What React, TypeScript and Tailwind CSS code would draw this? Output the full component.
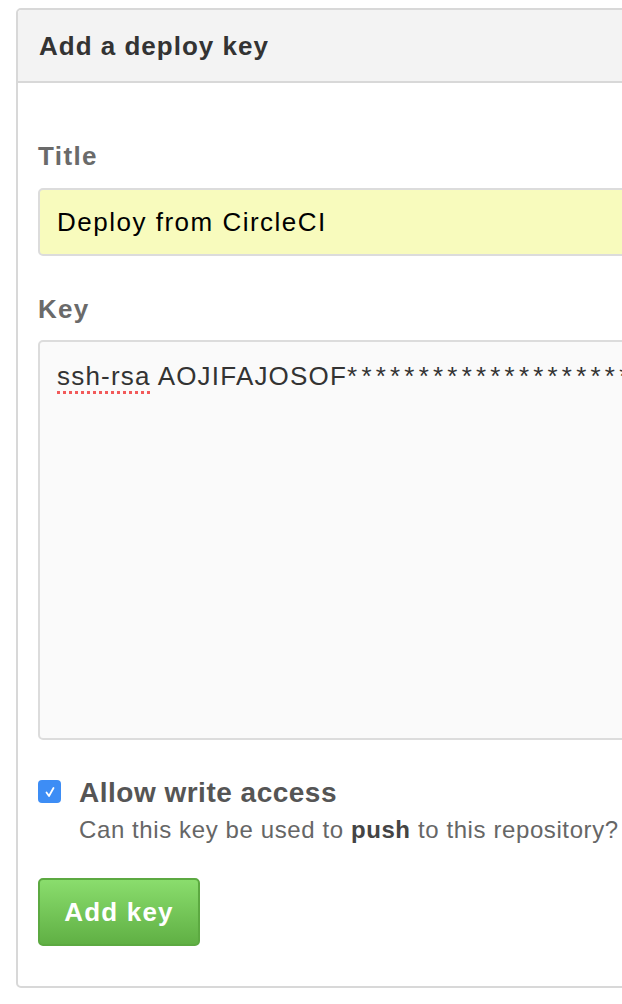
import React from "react";

export default function App() {
  return (
    <div className="min-h-screen w-[622px] overflow-hidden bg-white pt-2 pl-4 font-['Liberation_Sans',Arial,sans-serif]">
      <div className="w-[660px] rounded-[5px] border-2 border-[#d8d8d8] bg-white">
        {/* Header */}
        <div className="h-[73px] rounded-t-[4px] border-b-2 border-[#d8d8d8] bg-[#f3f3f3] pl-[21px] pt-[21px]">
          <h3 className="text-[26px] font-bold leading-[30px] tracking-[1px] text-[#333]">Add a deploy key</h3>
        </div>

        {/* Body */}
        <div className="pl-[20px] pt-[58px] pb-[40px]">
          <label className="block text-[26px] font-bold leading-[30px] tracking-[1.4px] text-[#6a6a6a]">Title</label>
          <div className="mt-[17px] flex h-[68px] items-center rounded-[5px] border-2 border-[#dcdcdc] bg-[#f8fbbd] pl-[17px] text-[26px] tracking-[1.5px] text-black">
            Deploy from CircleCI
          </div>

          <label className="mt-[38px] block text-[26px] font-bold leading-[30px] tracking-[1.2px] text-[#6a6a6a]">Key</label>
          <div className="mt-[16px] h-[400px] overflow-hidden rounded-[5px] border-2 border-[#dcdcdc] bg-[#fafafa] pl-[17px] pt-[19px] text-[26px] leading-[30px] tracking-[1.2px] whitespace-nowrap text-[#333]">
            <span className="underline decoration-dotted decoration-[#f25a5a] decoration-[3px] underline-offset-[6px]">ssh-rsa</span>{" "}
            AOJIFAJOSOF<span className="tracking-[4.2px]">***********************</span>
          </div>

          <div className="mt-[38px] flex items-start gap-[18px]">
            <div className="mt-[2px] flex h-[23px] w-[23px] items-center justify-center rounded-[4px] bg-[#3d8df5]">
              <svg width="14" height="14" viewBox="0 0 14 14" fill="none">
                <path d="M3.5 7.5 L6 11 L10.5 3" stroke="white" strokeWidth="1.8" strokeLinecap="round" strokeLinejoin="round" />
              </svg>
            </div>
            <div>
              <div className="text-[28px] font-bold leading-[30px] tracking-[0.5px] text-[#555]">Allow write access</div>
              <div className="mt-[8px] text-[24px] leading-[28px] tracking-[0.6px] whitespace-nowrap text-[#666]">
                Can this key be used to <b className="text-[#444]">push</b> to this repository?
              </div>
            </div>
          </div>

          <button className="mt-[34px] flex h-[68px] w-[162px] items-center justify-center rounded-[5px] border-2 border-[#5ca941] bg-gradient-to-b from-[#8add6d] to-[#60b044] text-[26px] font-bold tracking-[1.2px] text-white">
            Add key
          </button>
        </div>
      </div>
    </div>
  );
}
